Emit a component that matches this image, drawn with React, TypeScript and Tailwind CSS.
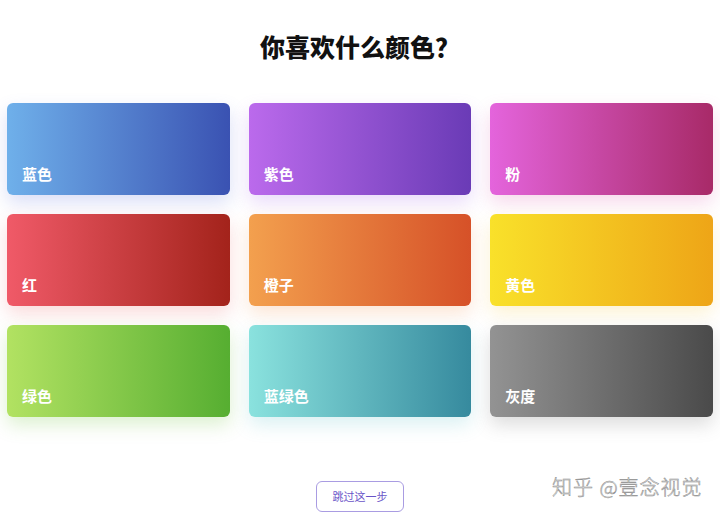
import React from "react";

const cards = [
  { name: "蓝色", bg: "bg-[linear-gradient(90deg,#6fb0ea,#3a52b2)]", sh: "shadow-[0_8px_18px_rgba(90,110,220,0.22)]" },
  { name: "紫色", bg: "bg-[linear-gradient(90deg,#bb6aec,#6a3bb6)]", sh: "shadow-[0_8px_18px_rgba(160,90,230,0.22)]" },
  { name: "粉", bg: "bg-[linear-gradient(90deg,#e464dc,#a82a68)]", sh: "shadow-[0_8px_18px_rgba(220,80,170,0.22)]" },
  { name: "红", bg: "bg-[linear-gradient(90deg,#f05a68,#a3231b)]", sh: "shadow-[0_8px_18px_rgba(230,80,80,0.2)]" },
  { name: "橙子", bg: "bg-[linear-gradient(90deg,#f3a04e,#d65128)]", sh: "shadow-[0_8px_18px_rgba(240,140,70,0.22)]" },
  { name: "黄色", bg: "bg-[linear-gradient(90deg,#f9e12a,#eea517)]", sh: "shadow-[0_8px_18px_rgba(245,200,60,0.22)]" },
  { name: "绿色", bg: "bg-[linear-gradient(90deg,#b2e262,#56ae31)]", sh: "shadow-[0_8px_18px_rgba(120,200,70,0.25)]" },
  { name: "蓝绿色", bg: "bg-[linear-gradient(90deg,#8ae2de,#368a9e)]", sh: "shadow-[0_8px_18px_rgba(90,190,200,0.22)]" },
  { name: "灰度", bg: "bg-[linear-gradient(90deg,#939393,#4a4a4a)]", sh: "shadow-[0_8px_18px_rgba(100,100,100,0.22)]" },
];

export default function App() {
  return (
    <div
      className="relative w-[720px] h-[516px] bg-white overflow-hidden flex flex-col items-center"
      style={{ fontFamily: '"Noto Sans CJK SC", "Noto Sans", sans-serif' }}
    >
      <h1 className="pt-[29px] text-[25px] leading-[34px] font-black text-[#111]">你喜欢什么颜色？</h1>
      <div className="mt-[40px] w-full px-[7px] grid grid-cols-3 gap-x-[19px] gap-y-[19px]">
        {cards.map((c) => (
          <div
            key={c.name}
            className={`h-[92px] rounded-[6px] ${c.bg} ${c.sh} flex items-end pl-[15px] pb-[8px]`}
          >
            <span className="text-white text-[15px] font-bold leading-[26px]">{c.name}</span>
          </div>
        ))}
      </div>
      <button className="mt-[64px] w-[88px] h-[31px] rounded-[6px] border border-[#a99ce2] text-[#6a55c8] text-[11px] bg-white">
        跳过这一步
      </button>
      <div
        className="absolute left-[552px] top-[472px] text-[20px] font-light text-[#f4f4f4] tracking-[1px]"
        style={{ WebkitTextStroke: "0.5px #8a8a8a" }}
      >
        知乎 @壹念视觉
      </div>
    </div>
  );
}
